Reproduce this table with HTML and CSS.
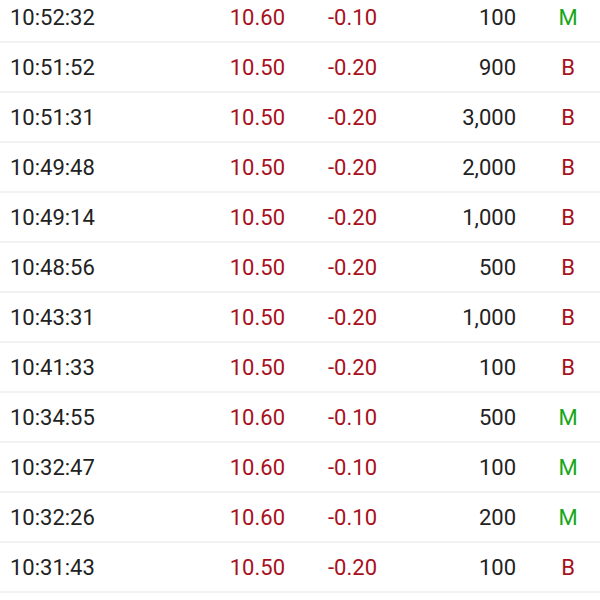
FILE: index.html
```html
<!DOCTYPE html>
<html>
<head>
<meta charset="utf-8">
<link rel="stylesheet" href="styles.css">
</head>
<body>
<div class="list">
  <div class="row"><span class="time">10:52:32</span><span class="price red">10.60</span><span class="chg red">-0.10</span><span class="vol">100</span><span class="side green">M</span></div>
  <div class="row"><span class="time">10:51:52</span><span class="price red">10.50</span><span class="chg red">-0.20</span><span class="vol">900</span><span class="side red">B</span></div>
  <div class="row"><span class="time">10:51:31</span><span class="price red">10.50</span><span class="chg red">-0.20</span><span class="vol">3,000</span><span class="side red">B</span></div>
  <div class="row"><span class="time">10:49:48</span><span class="price red">10.50</span><span class="chg red">-0.20</span><span class="vol">2,000</span><span class="side red">B</span></div>
  <div class="row"><span class="time">10:49:14</span><span class="price red">10.50</span><span class="chg red">-0.20</span><span class="vol">1,000</span><span class="side red">B</span></div>
  <div class="row"><span class="time">10:48:56</span><span class="price red">10.50</span><span class="chg red">-0.20</span><span class="vol">500</span><span class="side red">B</span></div>
  <div class="row"><span class="time">10:43:31</span><span class="price red">10.50</span><span class="chg red">-0.20</span><span class="vol">1,000</span><span class="side red">B</span></div>
  <div class="row"><span class="time">10:41:33</span><span class="price red">10.50</span><span class="chg red">-0.20</span><span class="vol">100</span><span class="side red">B</span></div>
  <div class="row"><span class="time">10:34:55</span><span class="price red">10.60</span><span class="chg red">-0.10</span><span class="vol">500</span><span class="side green">M</span></div>
  <div class="row"><span class="time">10:32:47</span><span class="price red">10.60</span><span class="chg red">-0.10</span><span class="vol">100</span><span class="side green">M</span></div>
  <div class="row"><span class="time">10:32:26</span><span class="price red">10.60</span><span class="chg red">-0.10</span><span class="vol">200</span><span class="side green">M</span></div>
  <div class="row"><span class="time">10:31:43</span><span class="price red">10.50</span><span class="chg red">-0.20</span><span class="vol">100</span><span class="side red">B</span></div>
</div>
</body>
</html>
```
FILE: styles.css
```css
html, body {
  margin: 0;
  padding: 0;
  background: #ffffff;
  overflow: hidden;
}
body {
  font-family: Roboto, "Liberation Sans", sans-serif;
  font-size: 22px;
  color: #222222;
}
.list {
  margin-top: -7px;
}
.row {
  display: grid;
  grid-template-columns: 190px 85px 92px 139px 84px;
  padding-left: 10px;
  height: 48px;
  align-items: center;
  border-bottom: 2px solid #f2f2f2;
}
.time { text-align: left; }
.price, .chg, .vol { text-align: right; }
.side { text-align: center; padding-left: 20px; }
.red { color: #a8101c; }
.green { color: #19a619; }
```
